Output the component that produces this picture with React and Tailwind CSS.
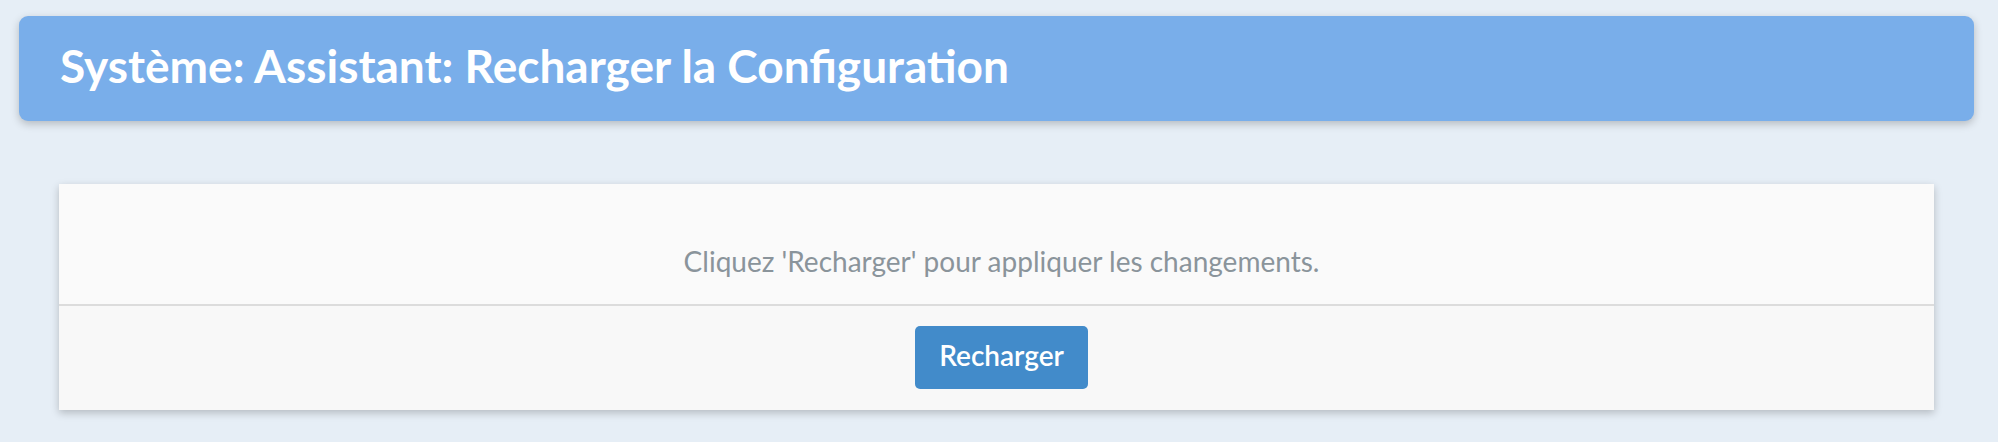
export default function App() {
  return (
    <div className="min-h-screen bg-[#e6eef6] pt-[16px] pl-[19px] pr-[24px] pb-[30px]" style={{ fontFamily: 'Lato, "Open Sans", sans-serif' }}>
      {/* Title bar */}
      <div className="h-[105px] rounded-[9px] bg-[#79aeea] pl-[41px] pt-[24px] shadow-[0_3px_8px_rgba(0,0,0,0.22)]">
        <h1 className="text-[46px] leading-[52px] font-bold text-white">Système: Assistant: Recharger la Configuration</h1>
      </div>

      {/* Card */}
      <div className="mt-[63px] mx-[40px] shadow-[0_3px_8px_rgba(0,0,0,0.22)]">
        <div className="h-[122px] bg-[#fafafa] pt-[57px] pl-[10px] text-center border-b-2 border-[#dcdcdc]">
          <p className="text-[28px] leading-[40px] text-[#8a949b]">Cliquez 'Recharger' pour appliquer les changements.</p>
        </div>
        <div className="h-[104px] bg-[#f8f8f8] pt-[20px] pl-[10px] flex justify-center">
          <button className="h-[63px] rounded-[5px] bg-[#428bca] px-[24px] pt-[9px] pb-[13px] text-[28px] leading-[41px] font-semibold text-white">
            Recharger
          </button>
        </div>
      </div>
    </div>
  );
}
